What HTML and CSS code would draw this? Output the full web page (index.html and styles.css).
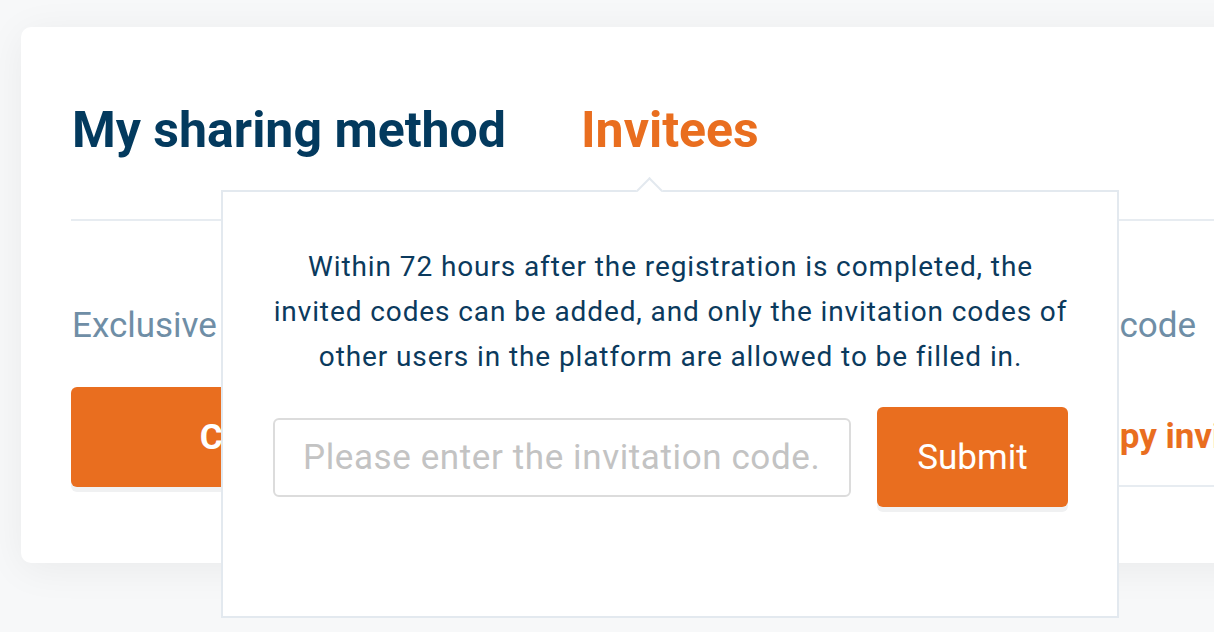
FILE: index.html
```html
<!DOCTYPE html>
<html lang="en">
<head>
    <meta charset="UTF-8">
    <meta name="viewport" content="width=device-width, initial-scale=1.0">
    <title>Invite Friends</title>
    <link rel="stylesheet" href="styles.css">
</head>
<body>
    <div class="card">
        <div class="tabs">
            <a class="tab">My sharing method</a>
            <a class="tab active">Invitees</a>
        </div>

        <div class="share-grid">
            <div class="share-col">
                <p class="share-label">Exclusive invitation code</p>
                <button class="btn-copy">Copy invitation code</button>
            </div>
            <div class="share-col">
                <p class="share-label">Exclusive link with the code</p>
                <div class="link-box">
                    <span class="link-url">https://www.example.com/register?code=8K2QX7</span>
                    <a class="link-copy">Copy invitation link</a>
                </div>
            </div>
        </div>

        <div class="popover">
            <p class="popover-text">Within 72 hours after the registration is completed, the invited codes can be added, and only the invitation codes of other users in the platform are allowed to be filled in.</p>
            <div class="popover-form">
                <input type="text" class="code-input" placeholder="Please enter the invitation code.">
                <button class="btn-submit">Submit</button>
            </div>
        </div>
    </div>
</body>
</html>
```

FILE: styles.css
```css
body {
    margin: 0;
    padding: 27px 0 0 21px;
    background-color: #f7f8f9;
    font-family: Roboto, "Liberation Sans", sans-serif;
    overflow: hidden;
    height: 632px;
    box-sizing: border-box;
}
.card {
    position: relative;
    width: 1340px;
    height: 536px;
    box-sizing: border-box;
    padding: 0 50px;
    background-color: #fff;
    border-radius: 10px;
    box-shadow: 0 6px 40px rgba(0, 0, 0, 0.06);
}
.tabs {
    display: flex;
    gap: 75px;
    padding: 73px 0 59px 1px;
    border-bottom: 2px solid #e7ecf1;
}
.tab {
    font-size: 50px;
    line-height: 60px;
    font-weight: 700;
    color: #033a5e;
}
.tab.active {
    color: #e96e1f;
}
.share-grid {
    display: grid;
    grid-template-columns: 578px 1fr;
    gap: 121px;
    padding-top: 85px;
}
.share-label {
    margin: 0 0 41px 1px;
    font-size: 35px;
    line-height: 40px;
    color: #6f8ea6;
    white-space: nowrap;
}
.btn-copy {
    width: 100%;
    height: 100px;
    border: none;
    border-radius: 6px;
    background-color: #e96e1f;
    color: #fff;
    font-family: inherit;
    font-size: 35px;
    font-weight: 700;
    box-shadow: 0 5px 0 #f0f1f2;
}
.link-box {
    display: flex;
    align-items: center;
    height: 98px;
    border-bottom: 2px solid #e7ecf1;
}
.link-url {
    width: 273px;
    overflow: hidden;
    white-space: nowrap;
    text-overflow: ellipsis;
    font-size: 30px;
    color: #033a5e;
}
.link-copy {
    margin-left: 34px;
    font-size: 35px;
    font-weight: 700;
    color: #e96e1f;
    white-space: nowrap;
}
.popover {
    position: absolute;
    left: 200px;
    top: 163px;
    width: 898px;
    height: 428px;
    box-sizing: border-box;
    padding: 52px 49px 0 50px;
    background-color: #fff;
    border: 2px solid #e3e9ef;
}
.popover::before {
    content: "";
    position: absolute;
    top: -11px;
    left: 417px;
    width: 17px;
    height: 17px;
    background-color: #fff;
    border-top: 2px solid #e3e9ef;
    border-left: 2px solid #e3e9ef;
    transform: rotate(45deg);
}
.popover-text {
    margin: 0 -9px;
    text-align: center;
    font-size: 28px;
    letter-spacing: 0.9px;
    line-height: 45px;
    color: #0b3a5d;
}
.popover-form {
    display: flex;
    align-items: center;
    gap: 26px;
    margin-top: 28px;
}
.code-input {
    flex: 1;
    height: 79px;
    box-sizing: border-box;
    padding: 0 16px 0 28px;
    border: 2px solid #dcdcdc;
    border-radius: 6px;
    font-family: inherit;
    font-size: 35px;
    letter-spacing: 0.6px;
    color: #033a5e;
    outline: none;
}
.code-input::placeholder {
    color: #c3c3c3;
}
.btn-submit {
    width: 191px;
    height: 100px;
    border: none;
    border-radius: 6px;
    background-color: #e96e1f;
    color: #fff;
    font-family: inherit;
    font-size: 35px;
    box-shadow: 0 5px 0 #f0f1f2;
}
```
